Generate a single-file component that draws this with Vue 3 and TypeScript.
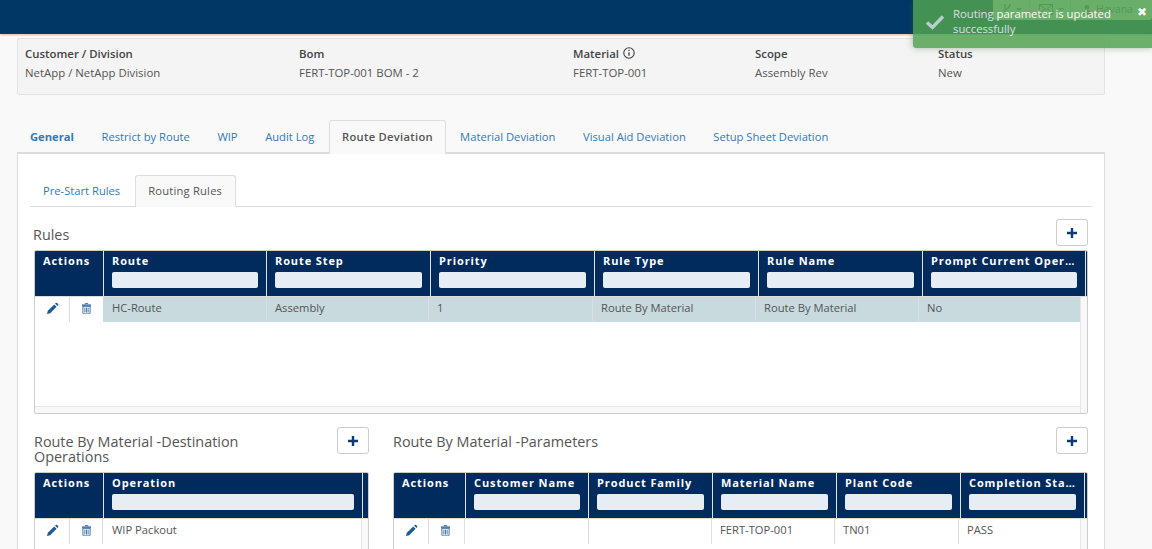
<script setup lang="ts">
interface Grid {
  cols: string[];
  headWidths: number[];
  bodyWidths: number[];
  row: string[];
}

const infoItems = [
  { label: 'Customer / Division', value: 'NetApp / NetApp Division', width: 274, info: false },
  { label: 'Bom', value: 'FERT-TOP-001 BOM - 2', width: 274, info: false },
  { label: 'Material', value: 'FERT-TOP-001', width: 182, info: true },
  { label: 'Scope', value: 'Assembly Rev', width: 183, info: false },
  { label: 'Status', value: 'New', width: 150, info: false }
];

const tabs = ['General', 'Restrict by Route', 'WIP', 'Audit Log', 'Route Deviation', 'Material Deviation', 'Visual Aid Deviation', 'Setup Sheet Deviation'];

const rulesGrid: Grid = {
  cols: ['Route', 'Route Step', 'Priority', 'Rule Type', 'Rule Name', 'Prompt Current Operation'],
  headWidths: [163, 164, 164, 164, 164, 163],
  bodyWidths: [164, 162, 164, 163, 163, 162],
  row: ['HC-Route', 'Assembly', '1', 'Route By Material', 'Route By Material', 'No']
};

const destGrid: Grid = {
  cols: ['Operation'],
  headWidths: [259],
  bodyWidths: [259],
  row: ['WIP Packout']
};

const paramGrid: Grid = {
  cols: ['Customer Name', 'Product Family', 'Material Name', 'Plant Code', 'Completion Status'],
  headWidths: [123, 124, 124, 124, 124],
  bodyWidths: [124, 123, 123, 124, 126],
  row: ['', '', 'FERT-TOP-001', 'TN01', 'PASS']
};
</script>

<template>
  <div class="app">
    <header class="topbar">
      <div class="nav-items">
        <div class="nav-item nav-branch">
          <svg width="8" height="12" viewBox="0 0 8 12"><path d="M2 1v8M7 1c0 4-2 3-5 7" fill="none" stroke="#5a6a70" stroke-width="1.3" /></svg>
          <i class="caret"></i>
        </div>
        <div class="nav-item nav-mail">
          <svg width="14" height="11" viewBox="0 0 14 11"><rect x="0.5" y="0.5" width="13" height="10" fill="none" stroke="#5a6a70" /><path d="M1 1l6 5 6-5M1 10l4-5M13 10L9 5" fill="none" stroke="#5a6a70" /></svg>
          <i class="caret"></i>
        </div>
        <div class="nav-item nav-user">
          <svg width="8" height="11" viewBox="0 0 9 11"><circle cx="4.5" cy="3" r="2.6" fill="#5a6a70" /><path d="M0 11c0-4 2-5 4.500-5s4.500 1 4.500 5z" fill="#5a6a70" /></svg>
          <span>Havana</span>
          <i class="caret"></i>
        </div>
      </div>
    </header>

    <div class="toast">
      <svg class="toast-check" width="20" height="16" viewBox="0 0 20 16"><path d="M2 8.500l5.500 5L18 2.500" fill="none" stroke="#fff" stroke-width="3.400" /></svg>
      <div class="toast-text">Routing parameter is updated successfully</div>
      <span class="toast-close">✖</span>
    </div>

    <main class="page">
      <section class="summary">
        <div v-for="item in infoItems" :key="item.label" class="summary-item" :style="{ width: item.width + 'px' }">
          <div class="summary-label">
            {{ item.label }}
            <svg v-if="item.info" class="info-icon" width="12" height="12" viewBox="0 0 11 11">
              <circle cx="5.500" cy="5.500" r="4.800" fill="none" stroke="#444" />
              <path d="M5.500 4.700v3.300M5.500 2.600v1.100" stroke="#444" stroke-width="1.200" />
            </svg>
          </div>
          <div class="summary-value">{{ item.value }}</div>
        </div>
      </section>

      <nav class="tabs">
        <a
          v-for="tab in tabs"
          :key="tab"
          class="tab"
          :class="{ active: tab === 'Route Deviation', strong: tab === 'General' }"
        >{{ tab }}</a>
      </nav>

      <section class="panel">
        <nav class="subtabs">
          <a class="subtab">Pre-Start Rules</a>
          <a class="subtab active">Routing Rules</a>
        </nav>

        <div class="block-head rules-head">
          <h3>Rules</h3>
          <button class="add-btn" type="button">
            <svg width="12" height="12" viewBox="0 0 12 12"><path d="M6 1v10M1 6h10" stroke="#0c3c70" stroke-width="2.400" /></svg>
          </button>
        </div>

        <div class="grid grid-rules">
          <div class="grid-head">
            <div class="cell-head" style="width: 69px">Actions</div>
            <div v-for="(col, i) in rulesGrid.cols" :key="col" class="cell-head" :style="{ width: rulesGrid.headWidths[i] + 'px' }">
              <div class="col-title">{{ col }}</div>
              <div class="filter"></div>
            </div>
          </div>
          <div class="grid-body">
            <div class="grid-row selected">
              <div class="action-cell">
                <svg width="13" height="13" viewBox="0 0 13 13"><path d="M1 12l.8-3.200 6.400-6.400 2.400 2.400-6.400 6.400zM9 1.600l.8-.6a1 1 0 0 1 1.300 0l1 1a1 1 0 0 1 0 1.300l-.7.800z" fill="#1d5a96" /></svg>
              </div>
              <div class="action-cell">
                <svg width="9" height="11" viewBox="0 0 10 12"><path d="M3.500 1.500V.5h3v1M0 2h10v1H0zM1 3.500h8V11a1 1 0 0 1-1 1H2a1 1 0 0 1-1-1zM3.200 5v5.500M5 5v5.500M6.800 5v5.500" fill="none" stroke="#1d5a96" stroke-width="0.900" /></svg>
              </div>
              <div v-for="(val, i) in rulesGrid.row" :key="i" class="cell" :style="{ width: rulesGrid.bodyWidths[i] + 'px' }">{{ val }}</div>
            </div>
          </div>
          <div class="hscroll"></div>
          <div class="vscroll"></div>
        </div>

        <div class="bottom">
          <div class="bottom-left">
            <div class="block-head dest-head">
              <h3>Route By Material -Destination Operations</h3>
              <button class="add-btn" type="button">
                <svg width="12" height="12" viewBox="0 0 12 12"><path d="M6 1v10M1 6h10" stroke="#0c3c70" stroke-width="2.400" /></svg>
              </button>
            </div>
            <div class="grid grid-small">
              <div class="grid-head">
                <div class="cell-head" style="width: 69px">Actions</div>
                <div class="cell-head" :style="{ width: destGrid.headWidths[0] + 'px' }">
                  <div class="col-title">{{ destGrid.cols[0] }}</div>
                  <div class="filter"></div>
                </div>
              </div>
              <div class="grid-body">
                <div class="grid-row">
                  <div class="action-cell">
                    <svg width="13" height="13" viewBox="0 0 13 13"><path d="M1 12l.8-3.200 6.400-6.400 2.400 2.400-6.400 6.400zM9 1.600l.8-.6a1 1 0 0 1 1.300 0l1 1a1 1 0 0 1 0 1.300l-.7.800z" fill="#1d5a96" /></svg>
                  </div>
                  <div class="action-cell">
                    <svg width="9" height="11" viewBox="0 0 10 12"><path d="M3.500 1.500V.5h3v1M0 2h10v1H0zM1 3.500h8V11a1 1 0 0 1-1 1H2a1 1 0 0 1-1-1zM3.200 5v5.500M5 5v5.500M6.800 5v5.500" fill="none" stroke="#1d5a96" stroke-width="0.900" /></svg>
                  </div>
                  <div class="cell" :style="{ width: destGrid.bodyWidths[0] + 'px' }">{{ destGrid.row[0] }}</div>
                </div>
              </div>
              <div class="vscroll"></div>
            </div>
          </div>

          <div class="bottom-right">
            <div class="block-head dest-head">
              <h3>Route By Material -Parameters</h3>
              <button class="add-btn" type="button">
                <svg width="12" height="12" viewBox="0 0 12 12"><path d="M6 1v10M1 6h10" stroke="#0c3c70" stroke-width="2.400" /></svg>
              </button>
            </div>
            <div class="grid grid-small">
              <div class="grid-head">
                <div class="cell-head" style="width: 72px">Actions</div>
                <div v-for="(col, i) in paramGrid.cols" :key="col" class="cell-head" :style="{ width: paramGrid.headWidths[i] + 'px' }">
                  <div class="col-title">{{ col }}</div>
                  <div class="filter"></div>
                </div>
              </div>
              <div class="grid-body">
                <div class="grid-row">
                  <div class="action-cell wide">
                    <svg width="13" height="13" viewBox="0 0 13 13"><path d="M1 12l.8-3.200 6.400-6.400 2.400 2.400-6.400 6.400zM9 1.600l.8-.6a1 1 0 0 1 1.300 0l1 1a1 1 0 0 1 0 1.300l-.7.800z" fill="#1d5a96" /></svg>
                  </div>
                  <div class="action-cell wide">
                    <svg width="9" height="11" viewBox="0 0 10 12"><path d="M3.500 1.500V.5h3v1M0 2h10v1H0zM1 3.500h8V11a1 1 0 0 1-1 1H2a1 1 0 0 1-1-1zM3.200 5v5.500M5 5v5.500M6.800 5v5.500" fill="none" stroke="#1d5a96" stroke-width="0.900" /></svg>
                  </div>
                  <div v-for="(val, i) in paramGrid.row" :key="i" class="cell" :style="{ width: paramGrid.bodyWidths[i] + 'px' }">{{ val }}</div>
                </div>
              </div>
              <div class="vscroll"></div>
            </div>
          </div>
        </div>
      </section>
    </main>
  </div>
</template>

<style>
html,
body {
  margin: 0;
  height: 549px;
  overflow: hidden;
  background: #f9f9f9;
}
</style>

<style scoped>
.app {
  position: relative;
  height: 549px;
  overflow: hidden;
  font-family: "Open Sans", "Noto Sans", sans-serif;
  font-size: 11.2px;
  color: #555;
}

.topbar {
  height: 34px;
  background: #003764;
  display: flex;
  justify-content: flex-end;
  align-items: flex-start;
  box-shadow: 0 1px 2px rgba(0, 0, 0, 0.25);
}

.nav-items {
  display: flex;
  height: 20px;
  width: 159px;
  background: #eceff0;
  border-radius: 0 0 3px 3px;
}

.nav-item {
  display: flex;
  align-items: center;
  gap: 5px;
  padding-bottom: 2px;
  border-right: 1px solid #c4d6c4;
  box-sizing: border-box;
  color: #5a6a70;
}

.nav-branch {
  width: 37px;
  padding-left: 10px;
}

.nav-mail {
  width: 41px;
  padding-left: 9px;
}

.nav-user {
  flex: 1;
  padding-left: 12px;
  border-right: none;
  font-size: 10.5px;
}

.caret {
  width: 0;
  height: 0;
  border-left: 3px solid transparent;
  border-right: 3px solid transparent;
  border-top: 3px solid #7a8a80;
}

.toast {
  position: absolute;
  top: 0;
  right: 0;
  width: 239px;
  height: 48px;
  box-sizing: border-box;
  padding: 6px 24px 0 40px;
  background: #51a351;
  opacity: 0.84;
  color: #fff;
  font-size: 11.3px;
  line-height: 15px;
  border-radius: 0 0 0 3px;
  box-shadow: 0 0 6px rgba(60, 100, 60, 0.5);
}

.toast-check {
  position: absolute;
  left: 12px;
  top: 14px;
  opacity: 0.8;
}

.toast-close {
  position: absolute;
  top: 5px;
  right: 5px;
  font-family: "DejaVu Sans", sans-serif;
  font-size: 12px;
  line-height: 14px;
}

.page {
  width: 1088px;
  margin: 4px 0 0 17px;
}

.summary {
  height: 57px;
  box-sizing: border-box;
  padding: 7px 7px 0;
  display: flex;
  background: #f4f4f4;
  border: 1px solid #e3e3e3;
  border-radius: 2px;
}

.summary-item {
  flex: none;
  line-height: 16px;
  font-size: 11.4px;
}

.summary-label {
  display: flex;
  align-items: center;
  gap: 4px;
  font-weight: 600;
  color: #444;
  margin-bottom: 3px;
}

.info-icon {
  margin-top: -2px;
}

.summary-value {
  color: #555;
}

.tabs {
  display: flex;
  align-items: flex-end;
  gap: 1.6px;
  height: 33px;
  margin-top: 25px;
}

.tab {
  height: 33px;
  box-sizing: border-box;
  padding: 9px 13px 0;
  line-height: 16px;
  color: #337ab7;
  white-space: nowrap;
}

.tab.strong {
  font-weight: 700;
}

.tab.active {
  padding: 8px 12px 0;
  margin-right: -0.5px;
  font-weight: 600;
  letter-spacing: 0.3px;
  color: #555;
  background: #f9f9f9;
  border: 1px solid #ddd;
  border-bottom: none;
  border-radius: 3px 3px 0 0;
  position: relative;
  z-index: 1;
  height: 34px;
  margin-bottom: -1px;
}

.panel {
  box-sizing: border-box;
  height: 397px;
  margin-top: -1px;
  padding: 21px 12px 0;
  background: #fff;
  border: 1px solid #ddd;
  border-top-width: 2px;
  border-bottom: none;
}

.subtabs {
  display: flex;
  gap: 2px;
  height: 31px;
  border-bottom: 1px solid #ddd;
}

.subtab {
  height: 32px;
  box-sizing: border-box;
  padding: 8px 13px 0;
  line-height: 16px;
  color: #337ab7;
  white-space: nowrap;
}

.subtab.active {
  padding: 7px 13px 0 12px;
  letter-spacing: 0.2px;
  color: #555;
  background: #f9f9f9;
  border: 1px solid #ddd;
  border-bottom: none;
  border-radius: 3px 3px 0 0;
}

.block-head {
  display: flex;
  justify-content: space-between;
  align-items: flex-start;
}

.block-head h3 {
  margin: 0;
  font-size: 14.4px;
  font-weight: 400;
  line-height: 15px;
  color: #555;
}

.rules-head {
  height: 31px;
  margin: 12px 4px 0 3px;
}

.rules-head h3 {
  padding-top: 8px;
}

.dest-head {
  height: 45px;
}

.dest-head h3 {
  padding-top: 7px;
  width: 260px;
}

.bottom-right .dest-head h3 {
  width: auto;
}

.add-btn {
  width: 32px;
  height: 27px;
  padding: 0;
  display: flex;
  align-items: center;
  justify-content: center;
  background: #fff;
  border: 1px solid #ccc;
  border-radius: 3px;
}

.grid {
  position: relative;
  box-sizing: border-box;
  border: 1px solid #ccc;
  border-radius: 2px;
  background: #fff;
  overflow: hidden;
}

.grid-rules {
  width: 1054px;
  height: 164px;
  margin: 0 4px;
}

.grid-small {
  height: 90px;
}

.grid-head {
  display: flex;
  height: 46px;
  background: #002b5c;
  border-bottom: 1px solid #ddd;
  box-sizing: border-box;
}

.cell-head {
  flex: none;
  box-sizing: border-box;
  padding: 2px 8px 0;
  border-right: 1px solid #dfe3e8;
  color: #fff;
  font-size: 11px;
  font-weight: 700;
  letter-spacing: 0.9px;
  line-height: 16px;
}

.col-title {
  white-space: nowrap;
  overflow: hidden;
  text-overflow: ellipsis;
}

.filter {
  height: 16px;
  margin-top: 3px;
  background: #e6edf5;
  border-radius: 2px;
}

.grid-body {
  position: absolute;
  top: 46px;
  left: 0;
  right: 6px;
}

.grid-row {
  display: flex;
  height: 25px;
}

.grid-row.selected .cell {
  background: #c8dade;
}

.action-cell {
  flex: none;
  width: 35px;
  height: 25px;
  box-sizing: border-box;
  padding-top: 5px;
  text-align: center;
  border-right: 1px solid #ddd;
}

.action-cell + .action-cell {
  width: 33px;
}

.action-cell.wide {
  width: 35px;
}

.action-cell.wide + .action-cell.wide {
  width: 36px;
  padding-right: 3px;
}

.grid-row.selected .action-cell + .action-cell {
  border-right: none;
}

.cell {
  flex: none;
  box-sizing: border-box;
  padding: 3px 8px 0;
  height: 25px;
  line-height: 16px;
  border-right: 1px solid #ddd;
  color: #555;
  white-space: nowrap;
}

.action-cell + .cell {
  padding-left: 9px;
}

.hscroll {
  position: absolute;
  left: 0;
  right: 0;
  bottom: 0;
  height: 6px;
  background: #f8f8f8;
  border-top: 1px solid #e6e6e6;
}

.vscroll {
  position: absolute;
  top: 46px;
  right: 0;
  bottom: 0;
  width: 6px;
  background: #f8f8f8;
  border-left: 1px solid #e6e6e6;
}

.bottom {
  display: flex;
  gap: 24px;
  margin: 13px 4px 0;
}

.bottom-left {
  width: 335px;
  flex: none;
}

.bottom-right {
  width: 695px;
  flex: none;
}
</style>
